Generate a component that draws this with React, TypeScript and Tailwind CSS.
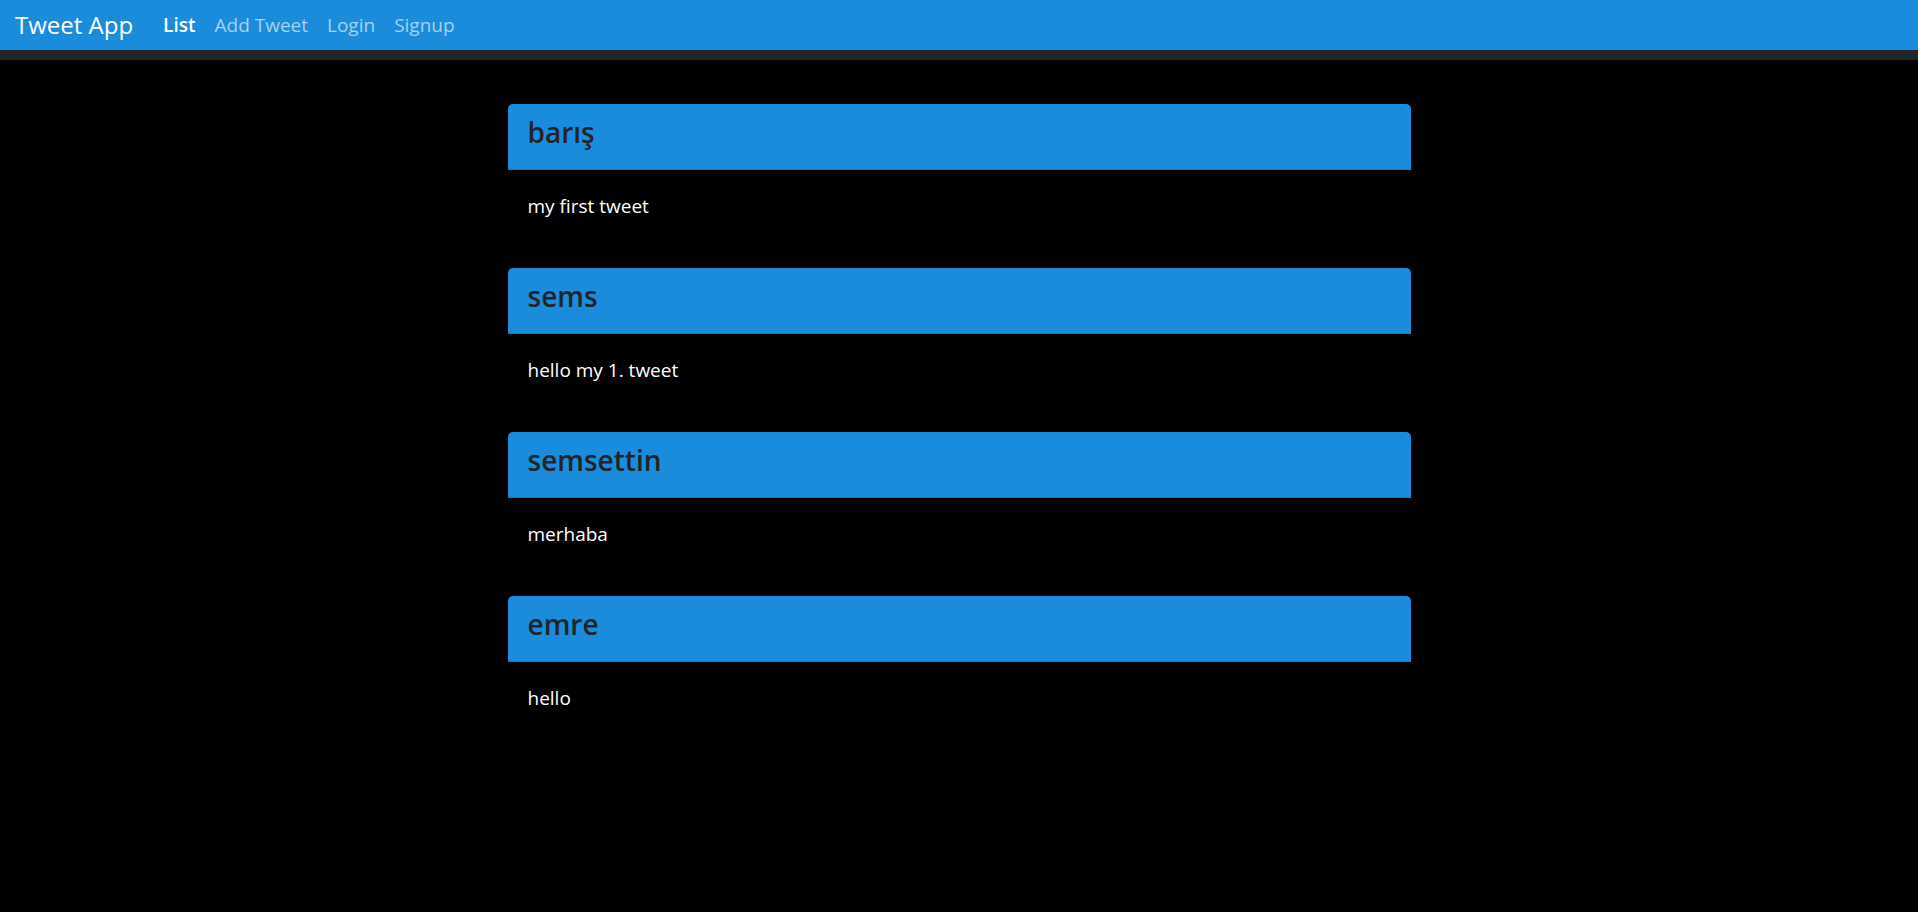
import React from 'react';

interface Tweet {
  user: string;
  text: string;
}

const tweets: Tweet[] = [
  { user: 'barış', text: 'my first tweet' },
  { user: 'sems', text: 'hello my 1. tweet' },
  { user: 'semsettin', text: 'merhaba' },
  { user: 'emre', text: 'hello' },
];

function Navbar() {
  return (
    <>
      <nav className="flex h-[50px] items-center bg-[#1a8cdb] px-[15px]">
        <a href="#" className="text-[24px] leading-none text-white">
          Tweet App
        </a>
        <div className="ml-[30px] flex items-center gap-[19px] text-[19px] leading-none">
          <a href="#" className="font-semibold text-white">List</a>
          <a href="#" className="text-[#a3d1f1]">Add Tweet</a>
          <a href="#" className="text-[#a3d1f1]">Login</a>
          <a href="#" className="text-[#a3d1f1]">Signup</a>
        </div>
      </nav>
      <div className="h-[10px] bg-[#212529]" />
    </>
  );
}

function TweetCard({ tweet }: { tweet: Tweet }) {
  return (
    <div className="flex flex-col">
      <div className="h-[66px] rounded-t-[5px] border-b border-[#1679c0] bg-[#1a8cdb] px-5 pt-3">
        <h3 className="text-[28px] leading-[1.2] font-semibold text-[#212529]">{tweet.user}</h3>
      </div>
      <div className="px-5 pt-[23px] pb-[33px]">
        <p className="text-[19px] leading-[27px] text-white">{tweet.text}</p>
      </div>
    </div>
  );
}

export default function App() {
  return (
    <div className="min-h-screen bg-black" style={{ fontFamily: '"Open Sans", "Noto Sans", sans-serif' }}>
      <Navbar />
      <main className="mx-auto flex w-[903px] flex-col gap-[15px] pt-[44px]">
        {tweets.map((t) => (
          <TweetCard key={t.user} tweet={t} />
        ))}
      </main>
    </div>
  );
}
